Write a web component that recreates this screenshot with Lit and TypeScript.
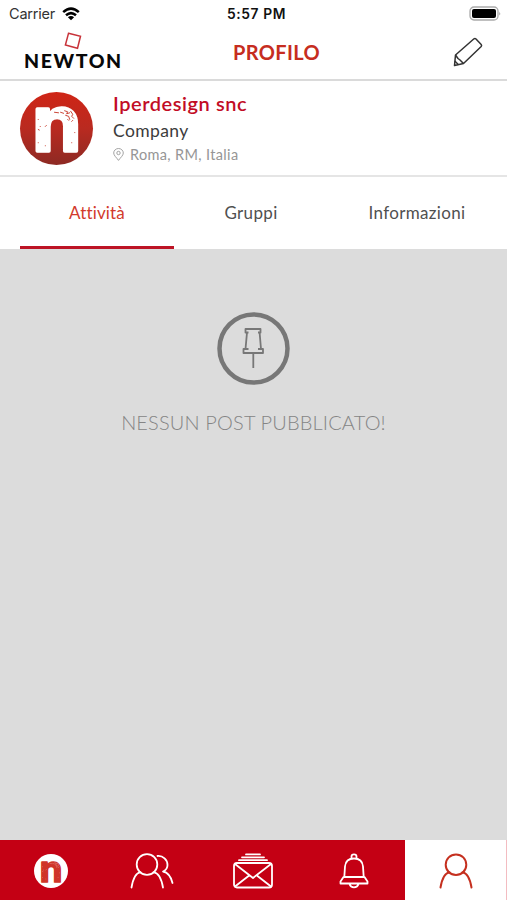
import { LitElement, html, css, svg } from "lit";
import { customElement, property } from "lit/decorators.js";
import { classMap } from "lit/directives/class-map.js";

@customElement("brand-mark")
class BrandMark extends LitElement {
  @property({ type: Boolean, reflect: true }) inverse = false;
  static styles = css`
    :host { display: block; }
    svg { display: block; width: 100%; height: 100%; overflow: visible; }
    .letter { font: 700 76px "Inter", sans-serif; }
  `;
  render() {
    const ink = this.inverse ? "#cf3428" : "#ffffff";
    const spot = this.inverse ? "#e89a8c" : "#c63524";
    return html`<svg viewBox="0 0 72 72">
      <defs>
        <linearGradient id="disc" x1="0" y1="0" x2="0" y2="1">
          <stop offset="0" stop-color="#cf2516" />
          <stop offset="0.5" stop-color="#b92a20" />
          <stop offset="1" stop-color="#8d2a24" />
        </linearGradient>
      </defs>
      <circle cx="36" cy="36" r="36" fill=${this.inverse ? "#ffffff" : "url(#disc)"} />
      <text class="letter" x="12.300" y="58.300" textLength="48" lengthAdjust="spacingAndGlyphs"
        fill=${ink} stroke=${ink} stroke-width="3.600" stroke-linejoin="round">n</text>
      <g fill="none" stroke=${spot} stroke-width="0.900" stroke-linecap="round">
        <path d="M34 20l4 .5M40 20l3 1M44 18.500l3 1-1 2 3-1M45 23l3 1 1 3M50 19l2 3-1 2 2 2M47 27l1 1M52 28l-1 1" />
        <path d="M18 27v.1M20 34v.1M18 37l1 .5M26 33l-1 1M18 50v.1M25 53v.1M54 40v.1M51 50v.1" />
      </g>
    </svg>`;
  }
}

const wifi = svg`<svg class="wifi" viewBox="0 0 18 14">
  <g fill="none" stroke="#000" stroke-width="2.500">
    <path d="M1.200 5.200Q9-1.900 16.800 5.200" /><path d="M4 8.300Q9 3.900 14 8.300" />
  </g><path d="M9 13.300L5.900 10.300Q9 7.700 12.100 10.300Z" />
</svg>`;

const navIcons = {
  people: svg`<svg class="nav-icon" viewBox="0 0 44 36">
    <circle cx="17" cy="11.500" r="10.300" />
    <path d="M1.500 34.500C3 26 5.500 20 10.500 19.200M23.500 19.200C28.500 20 31.500 26 33 34.500M27.500 3C33 2.500 37.500 7 37.500 12C37.500 15 36.500 17 33 18.500C38.500 19.500 41 24 42.500 30" />
  </svg>`,
  mail: svg`<svg class="nav-icon mail" viewBox="0 0 42 36">
    <rect x="2" y="10" width="38" height="24.500" rx="3" />
    <path d="M3 11L21 25L39 11M3 33.500L16.500 23M39 33.500L25.500 23M7 7.200H35M10 4.300H32M14 1.400H28" />
  </svg>`,
  bell: svg`<svg class="nav-icon bell" viewBox="0 0 30 36">
    <path d="M12.500 5.500V3.500Q12.500 1.300 15 1.300Q17.500 1.300 17.500 3.500V5.500M5.300 24L6 13.500C6.500 8 10 5.500 15 5.500S23.500 8 24 13.500L24.700 24M4.500 24H25.500L28.500 28.500V30.500H1.500V28.500ZM10.500 31Q11.500 34.300 15 34.300T19.500 31" />
  </svg>`,
  person: svg`<svg class="nav-icon person" viewBox="0 0 34 36">
    <circle cx="17" cy="11.700" r="10.300" />
    <path d="M1.500 34.500C3 26 5.500 20 10.500 19.300M23.500 19.300C28.500 20 31 26 32.500 34.500" />
  </svg>`,
};

@customElement("app-root")
class AppRoot extends LitElement {
  static styles = css`
    :host { display: flex; flex-direction: column; height: 100vh; background: #fff; overflow: hidden; font-family: "Lato", sans-serif; white-space: nowrap; }
    svg { display: block; flex: none; }
    .status { display: grid; grid-template-columns: 1fr auto 1fr; align-items: center; height: 27px; padding: 0 6px 0 9px; box-sizing: border-box; font: 14.5px "Inter", sans-serif; color: #111; }
    .carrier { display: flex; align-items: center; gap: 7px; letter-spacing: -0.2px; color: #333; }
    .wifi { width: 18px; height: 14px; }
    .time { font-weight: 600; font-size: 13.8px; letter-spacing: 0.6px; padding-left: 3px; }
    .battery { width: 32px; height: 15px; justify-self: end; }
    .header { display: grid; grid-template-columns: 209px auto 1fr; height: 54px; box-sizing: border-box; padding: 0 23px 0 24px; border-bottom: 2px solid #dadada; }
    .brand { display: flex; flex-direction: column; }
    .square { width: 18px; height: 18px; margin: 5px 0 0 40px; }
    .wordmark { font: 900 19.5px/22px "Lato", sans-serif; letter-spacing: 1.6px; color: #080808; }
    .title { font: 700 20px/50px "Lato", sans-serif; letter-spacing: 0.35px; color: #c62d20; }
    .edit { width: 32px; height: 32px; justify-self: end; margin-top: 9px; }
    .profile { display: flex; gap: 20px; height: 96px; box-sizing: border-box; padding: 11px 20px 0; border-bottom: 2px solid #e5e5e5; }
    .avatar { width: 73px; height: 73px; flex: none; }
    .details { margin-top: -1px; }
    .name { font-size: 20px; line-height: 25px; font-weight: 600; letter-spacing: 0.55px; color: #c20c25; }
    .role { font-size: 17.5px; line-height: 30px; letter-spacing: 0.4px; color: #3c3c3c; }
    .place { display: flex; align-items: center; gap: 6px; font-size: 14.5px; line-height: 17px; letter-spacing: 0.35px; color: #969696; }
    .marker { width: 11px; height: 13px; }
    .tabs { display: grid; grid-template: 72px / 154px 154px 1fr; padding: 0 1px 0 20px; }
    .tab { box-sizing: border-box; height: 72px; padding-top: 6px; text-align: center; font-size: 17px; line-height: 60px; letter-spacing: 0.35px; color: #505050; }
    .tab.active { letter-spacing: 0.15px; color: #d23a2c; border-bottom: 3px solid #bd1425; }
    .feed { flex: 1; background: #dcdcdc; display: flex; flex-direction: column; align-items: center; padding-top: 63px; }
    .pin { width: 73px; height: 73px; }
    .empty { margin-top: 24px; font-size: 20px; line-height: 26px; font-weight: 300; letter-spacing: 0.15px; color: #858585; }
    .nav { display: grid; grid-template-columns: repeat(4, 1fr) 102px; height: 60px; background: #c40014; }
    .item { display: flex; align-items: center; justify-content: center; padding-top: 1px; }
    .item.active { background: #fff; border-right: 1px solid #f3bcc1; }
    .small-mark { width: 34px; height: 34px; }
    .nav-icon { width: 44px; height: 36px; fill: none; stroke: #fff; stroke-width: 1.8; stroke-linecap: round; stroke-linejoin: round; }
    .mail { width: 42px; } .bell { width: 30px; }
    .person { width: 34px; stroke: #c5301f; stroke-width: 2; }
  `;

  render() {
    return html`
      <div class="status">
        <div class="carrier"><span>Carrier</span>${wifi}</div>
        <div class="time">5:57 PM</div>
        <svg class="battery" viewBox="0 0 32 15">
          <rect x="1" y="1" width="28" height="13" rx="4" fill="#fff" stroke="#aaa" stroke-width="1.300" />
          <rect x="3" y="3" width="24" height="9" rx="2" /><path d="M30.300 5.500Q32 7.500 30.300 9.500Z" fill="#999" />
        </svg>
      </div>
      <div class="header">
        <div class="brand">
          <svg class="square" viewBox="0 0 18 18"><path d="M4.500 1.300L16.500 4.200L13.500 16.300L1.400 13Z" fill="none" stroke="#c8333a" stroke-width="1.500" /></svg>
          <div class="wordmark">NEWTON</div>
        </div>
        <div class="title">PROFILO</div>
        <svg class="edit" viewBox="0 0 32 32" fill="none" stroke="#333" stroke-width="1.500" stroke-linejoin="round">
          <path d="M3.500 19L22 2.800Q23 2 24 3L29.200 8.500Q30 9.500 29.200 10.500L11.500 27.500L2.500 29.500Z" /><path d="M3.500 19L6 22.500L8 24L11.500 27.500M2.800 25L6.500 28.700" />
        </svg>
      </div>
      <div class="profile">
        <brand-mark class="avatar"></brand-mark>
        <div class="details">
          <div class="name">Iperdesign snc</div>
          <div class="role">Company</div>
          <div class="place">
            <svg class="marker" viewBox="0 0 11 13" fill="none" stroke="#999" stroke-width="0.900"><path d="M5.500 12.400C3.500 9.500.700 7.500.700 5A4.800 4.500 0 0 1 10.300 5C10.300 7.500 7.500 9.500 5.500 12.400Z" /><circle cx="5.500" cy="5" r="1.700" /></svg>
            <span>Roma, RM, Italia</span>
          </div>
        </div>
      </div>
      <div class="tabs">
        ${["Attività", "Gruppi", "Informazioni"].map((label, i) => html`<div class=${classMap({ tab: true, active: i === 0 })}><span>${label}</span></div>`)}
      </div>
      <div class="feed">
        <svg class="pin" viewBox="0 0 73 73" fill="none" stroke="#777">
          <circle cx="36.500" cy="36.500" r="34" stroke-width="4.500" />
          <path d="M28.500 17H43.500V20.500H42.600L44 37H46V41H26.500V37H28.500L30 20.500H28.500ZM28.500 37H31.500M44 37H41M30 20.500H31.500M42.600 20.500H41M36.300 41V56" stroke-width="1.800" stroke-linejoin="round" />
        </svg>
        <div class="empty">NESSUN POST PUBBLICATO!</div>
      </div>
      <div class="nav">
        <div class="item"><brand-mark inverse class="small-mark"></brand-mark></div>
        <div class="item">${navIcons.people}</div>
        <div class="item">${navIcons.mail}</div>
        <div class="item">${navIcons.bell}</div>
        <div class="item active">${navIcons.person}</div>
      </div>
    `;
  }
}
